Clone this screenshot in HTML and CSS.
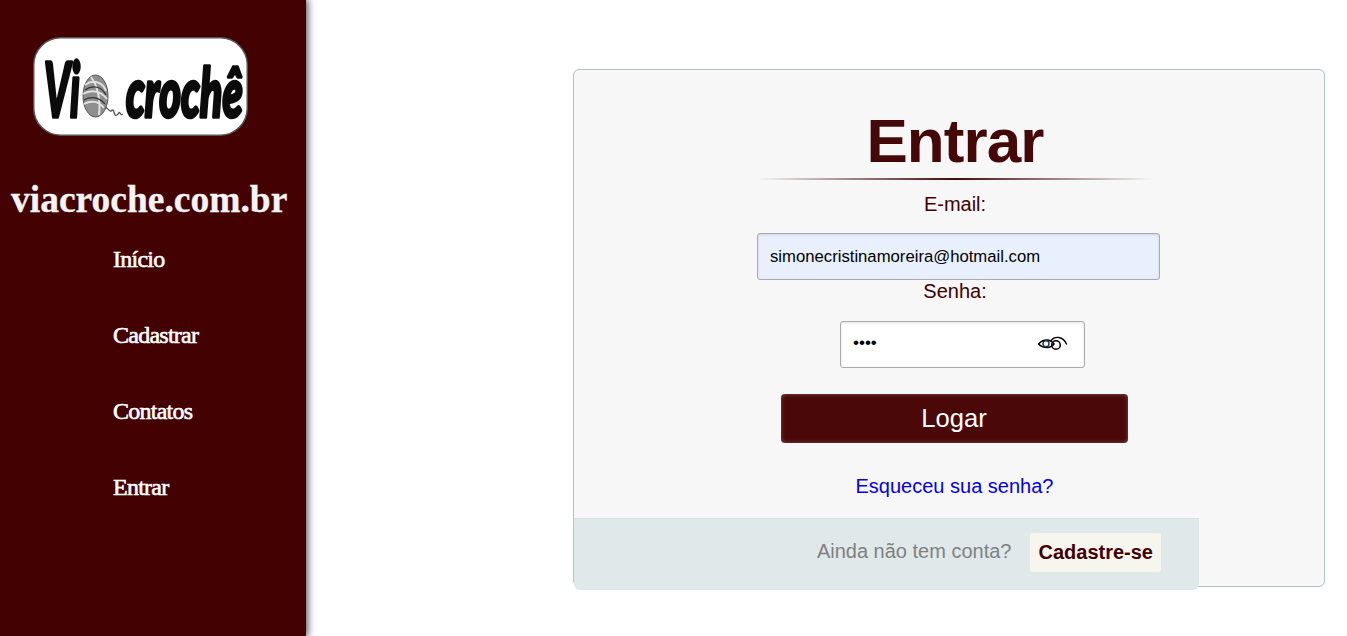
FILE: index.html
```html
<!DOCTYPE html>
<html lang="pt-BR">
<head>
<meta charset="utf-8">
<title>Entrar - viacroche.com.br</title>
<link rel="stylesheet" href="styles.css">
</head>
<body>
<div class="page">
  <aside class="sidebar">
    <div class="logo">
      <svg class="logo-art" viewBox="0 0 215 99" width="215" height="99" role="img" aria-label="Via crochê">
        <rect x="0.75" y="0.75" width="213.500" height="97.500" rx="27" fill="#fff" stroke="#555" stroke-width="1.500"/>
        <text class="logo-text logo-text-big" transform="translate(11 80) scale(.52 1)">Vi</text>
        <text class="logo-text logo-text-small" transform="translate(93 80) scale(.61 1)">crochê</text>
        <g fill="none">
          <ellipse cx="62.500" cy="59" rx="12.500" ry="21" fill="#8f8f8f" stroke="#555"/>
          <path d="M52 48c8-6 18-3 21 6M50 57c8-5 18-3 24 5M51 67c7-4 15-3 20 4M58 40c6 8 10 22 8 38" stroke="#e2e2e2" stroke-width="2"/>
          <path d="M52 53c8-6 17-3 21 5M51 63c7-4 15-3 21 4" stroke="#333" stroke-width="1.200"/>
          <path d="M72 70c4 2 5 5 6 4s2-2 3 1 1 4 3 3 2-4 3-2 1 2 3 1" stroke="#555" stroke-width="1.300"/>
        </g>
      </svg>
    </div>
    <h2 class="site-name">viacroche.com.br</h2>
    <nav class="menu">
      <a href="#">Início</a>
      <a href="#">Cadastrar</a>
      <a href="#">Contatos</a>
      <a href="#">Entrar</a>
    </nav>
  </aside>
  <main class="content">
    <section class="card">
      <form class="form">
        <h1 class="title">Entrar</h1>
        <div class="rule"></div>
        <label class="label label-email" for="email">E-mail:</label>
        <input class="field field-email" id="email" type="text" value="simonecristinamoreira@hotmail.com">
        <label class="label label-pass" for="senha">Senha:</label>
        <div class="field field-pass">
          <input class="pass-input" id="senha" type="password" value="1234">
          <svg class="eye" viewBox="0 0 30 16" width="30" height="16" aria-hidden="true">
            <path d="M0.700 8C3 5 6 4 9 4s5 1.500 7 4c-2 2.500-4 3.500-7 3.500S3 10.500.7 8Z" fill="none" stroke="#000" stroke-width="1.600"/>
            <circle cx="8" cy="7.800" r="3" fill="none" stroke="#1a3550" stroke-width="1.400"/>
            <circle cx="18" cy="9" r="4.300" fill="none" stroke="#000" stroke-width="1.500"/>
            <path d="M13 4.500C15 2 18 1 21 1.500c3.500.5 6 3 7.800 7" fill="none" stroke="#000" stroke-width="1.400"/>
          </svg>
        </div>
        <button class="submit" type="button">Logar</button>
        <a class="forgot" href="#">Esqueceu sua senha?</a>
      </form>
      <footer class="card-footer">
        <span class="footer-text">Ainda não tem conta?</span>
        <a class="signup" href="#">Cadastre-se</a>
      </footer>
    </section>
  </main>
</div>
</body>
</html>
```
FILE: styles.css
```css
* { box-sizing: border-box; }
html, body { margin: 0; height: 100%; overflow: hidden; background: #fff; }
body { font-family: "Liberation Sans", Arial, sans-serif; }

.page { display: flex; height: 636px; }

.sidebar {
  flex: 0 0 306px;
  background: #430101;
  box-shadow: 1px 0 7px 1px rgba(0, 0, 0, .65);
  display: flex;
  flex-direction: column;
  padding-top: 37px;
}
.logo { display: flex; padding-left: 33px; }
.logo-art { display: block; filter: blur(.3px); }
.logo-text {
  font-family: "Lato", "Liberation Sans", sans-serif;
  font-weight: 900;
  font-style: italic;
  fill: #0b0b0b;
  stroke: #0b0b0b;
  stroke-width: 3.500px;
  stroke-linejoin: round;
}
.logo-text-big { font-size: 76px; }
.logo-text-small { font-size: 68px; }
.site-name {
  margin: 44px 0 0;
  padding-left: 11px;
  font-family: "Liberation Serif", "Times New Roman", serif;
  font-size: 37.500px;
  line-height: 40px;
  font-weight: 700;
  color: #f5f4f4;
  white-space: nowrap;
  -webkit-text-stroke: .3px #f5f4f4;
}
.menu {
  display: flex;
  flex-direction: column;
  gap: 52px;
  padding: 27px 0 0 113px;
}
.menu a {
  font-family: "Liberation Serif", "Times New Roman", serif;
  font-size: 24px;
  line-height: 24px;
  font-weight: 400;
  letter-spacing: -.75px;
  color: #fff;
  text-decoration: none;
  -webkit-text-stroke: .6px #fff;
}

.content { flex: 1; padding: 69px 22px 0 267px; }

.card {
  position: relative;
  height: 518px;
  background: #f7f7f7;
  border: 1px solid #a9c6ca;
  border-radius: 6px;
}
.form {
  display: flex;
  flex-direction: column;
  align-items: center;
  height: 448px;
  padding-left: 12px;
}
.title {
  margin: 33px 0 0;
  font-size: 62px;
  line-height: 75px;
  letter-spacing: -.9px;
  font-weight: 700;
  color: #450808;
}
.rule {
  width: 396px;
  height: 2px;
  background: linear-gradient(to right, rgba(69, 8, 8, 0), #450808 50%, rgba(69, 8, 8, 0));
}
.label { font-size: 20px; line-height: 23px; color: #400000; }
.label-email { margin-top: 13px; }
.label-pass { margin-top: 0; }
.field {
  border: 1px solid #aaa;
  border-radius: 3px;
  height: 47px;
  font-family: inherit;
  box-shadow: inset 0 1px 3px rgba(0, 0, 0, .12);
}
.field-email {
  display: block;
  width: 403px;
  margin: 17px 0 0 7px;
  padding: 0 12px;
  background: #e8f0fe;
  font-size: 16.700px;
  color: #000;
  outline: 0;
}
.field-pass {
  width: 245px;
  margin: 18px 0 0 15px;
  padding: 0 16px 0 12px;
  background: #fff;
  display: flex;
  align-items: center;
  justify-content: space-between;
}
.pass-input {
  border: 0;
  background: transparent;
  width: 150px;
  padding: 0;
  font-family: inherit;
  font-size: 17px;
  color: #000;
  outline: 0;
  margin-top: -3px;
}
.eye { display: block; margin-top: -1px; }
.submit {
  width: 347px;
  height: 49px;
  margin: 26px 2px 0 0;
  border: 0;
  border-radius: 4px;
  background: #4a0808;
  box-shadow: inset 0 0 4px rgba(255, 255, 255, .3);
  color: #fff;
  font-family: inherit;
  font-size: 25.600px;
}
.forgot {
  margin: 32px 1px 0 0;
  font-size: 20px;
  line-height: 23px;
  color: #0000ee;
  text-decoration: none;
}

.card-footer {
  position: absolute;
  left: 0;
  top: 448px;
  width: 625px;
  height: 72px;
  display: flex;
  align-items: center;
  justify-content: flex-end;
  gap: 19px;
  padding: 0 38px 5px 0;
  background: #e0e9ea;
  border-top: 1px solid #d5e3e4;
  border-radius: 0 0 6px 6px;
}
.footer-text { font-size: 20px; color: #808080; margin-top: -1px; }
.signup {
  display: block;
  background: #f6f6ee;
  border-radius: 3px;
  padding: 8px;
  font-size: 20px;
  line-height: 23px;
  font-weight: 700;
  color: #400000;
  text-decoration: none;
}
```
